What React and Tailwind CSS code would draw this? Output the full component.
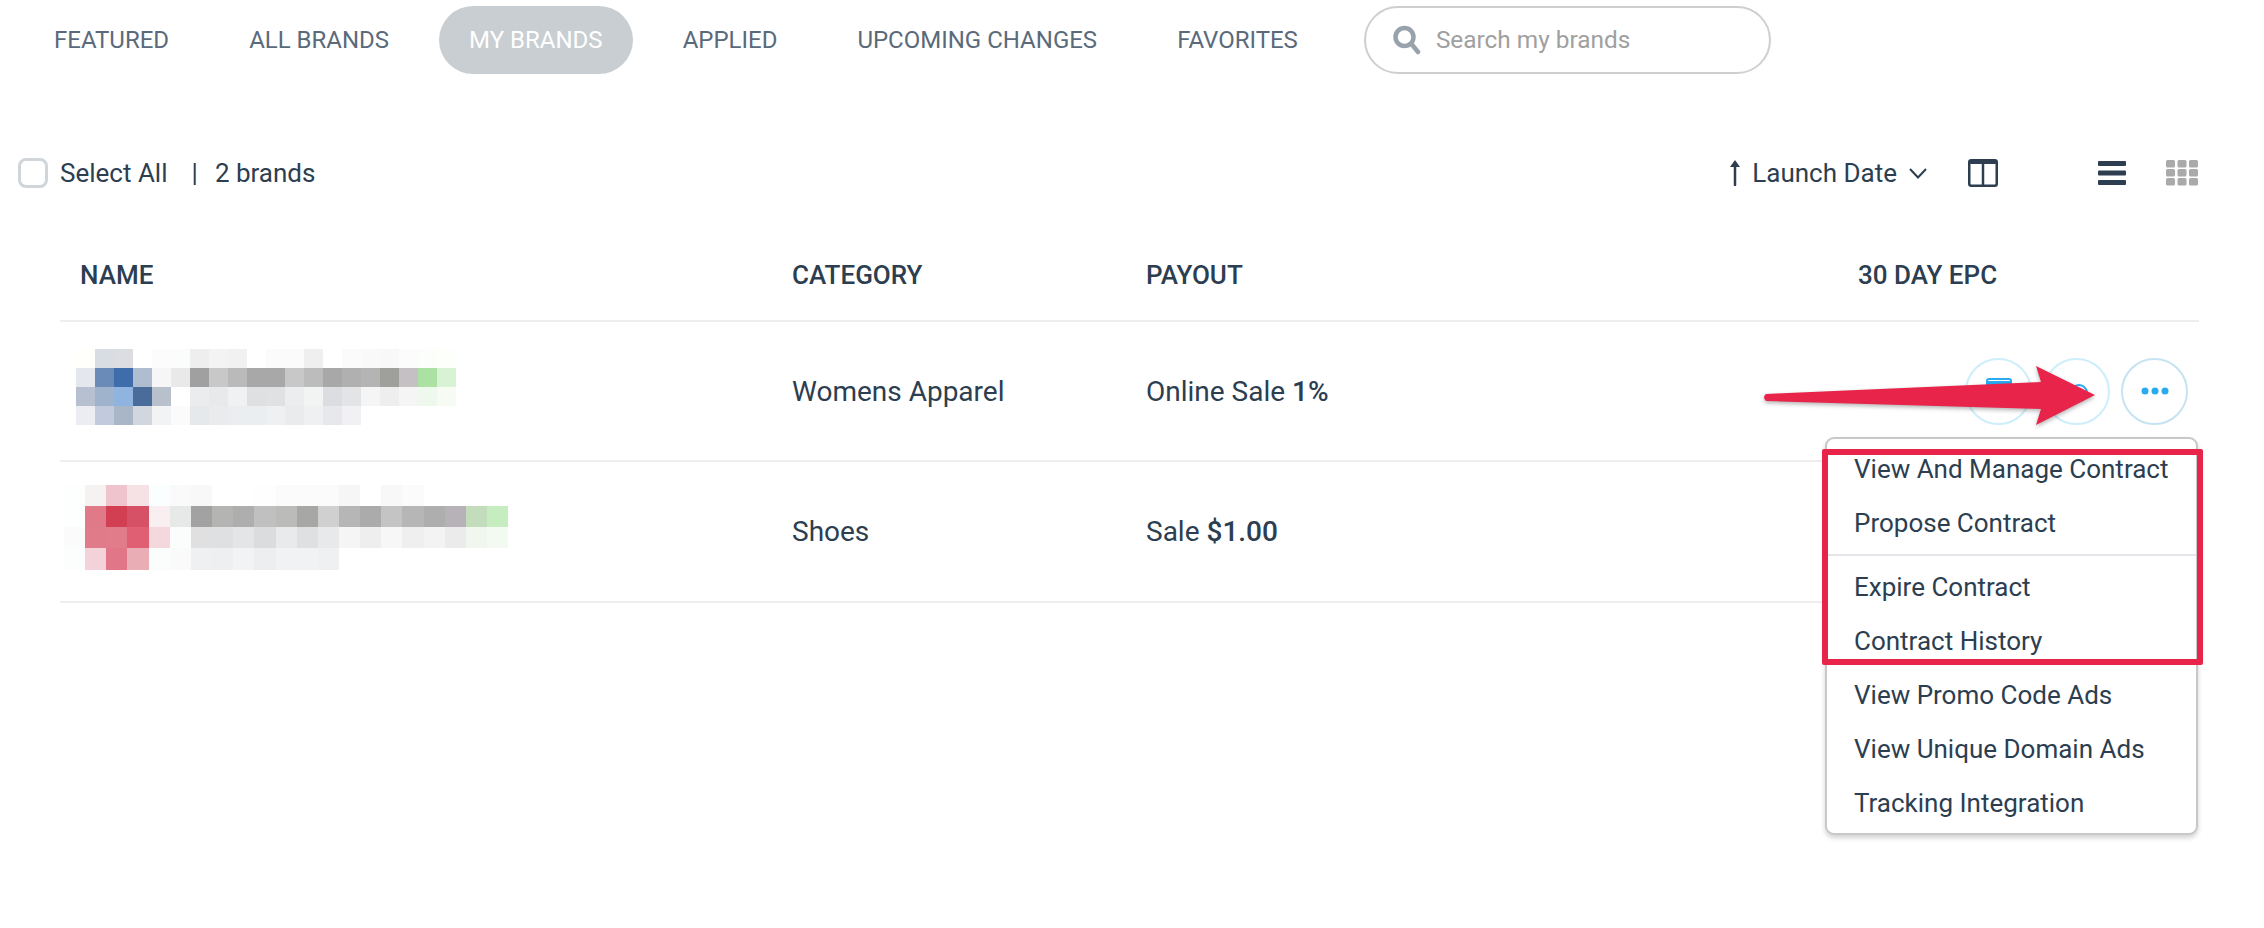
import React from 'react';

const tabs = ['FEATURED', 'ALL BRANDS', 'MY BRANDS', 'APPLIED', 'UPCOMING CHANGES', 'FAVORITES'];

// Blurred-out brand logos, one colour per mosaic cell
const blueLogo = [
  ['fffffc', 'd8dce3', 'dcdde0', 'ffffff', 'fcfcfc', 'fbfcfc', 'eeeeee', 'f3f3f3', 'f1f1f1', 'ffffff', 'fbfbfb', 'fbfbfb', 'efefef', 'ffffff', 'fbfbfb', 'f9f9f9', 'f8f8f8', 'fcfcfc', 'fcfefb', 'fdfffb'],
  ['e4e7ed', '6a8ab8', '3f6cab', 'b0bdd0', 'f6f6f6', 'e9e9e9', 'a0a0a0', 'c8c8c8', 'bababa', 'a8a8a8', 'a8a8a8', 'c8c8c8', 'bcbcbc', 'a8a8a8', 'b0b0b0', 'b4b4b4', '9f9f9c', 'c4c0c4', 'abe2a3', 'd8f3d4'],
  ['b6c0d0', 'a0b3cc', '8fb4e0', '4a6c9a', 'b8c0cc', 'ffffff', 'ebecee', 'e8e9ea', 'f0f1f2', 'dfe0e2', 'e0e1e3', 'ecedef', 'f2f3f3', 'dcdde0', 'e3e4e6', 'f5f5f5', 'eeeeee', 'f5f5f5', 'eef8ec', 'f6fbf4'],
  ['ecedf2', 'c2cbdd', 'a9b6c6', 'd2d6de', 'f2f3f5', 'fbfbfb', 'e5e9ec', 'e9ebed', 'ecedf0', 'ebeef1', 'eff0f2', 'eaebed', 'eff0f2', 'e7e8ec', 'f1f1f3'],
];

const redLogo = [
  ['fdfefe', 'f6f2f2', 'f0c4cc', 'f6e2e5', 'fbfeff', 'fafafa', 'f8f8f8', 'ffffff', 'ffffff', 'fefefe', 'fbfbfb', 'fbfbfb', 'fafbfa', 'f6f6f6', 'ffffff', 'f8f8f8', 'fbfbfb'],
  ['fdfefe', 'e07a88', 'd33f52', 'd65166', 'f9eef0', 'e7e9e8', 'a2a2a2', 'b4b4b2', 'aeaeae', 'c0c0c0', 'bbbbba', 'a7a7a5', 'd0d0d0', 'b6b6b6', 'ababab', 'c4c4c4', 'b6b6b6', 'aeaeae', 'b7b2b7', 'c2dcbc', 'c6edc0'],
  ['fbfbfb', 'e07c8a', 'e17c8a', 'e05f72', 'f5d8de', 'fbfdfc', 'e0e0e0', 'dfe0e1', 'e4e5e6', 'dbdcde', 'e9eaeb', 'dfe0e2', 'e8e9eb', 'f5f5f5', 'eeeeee', 'f7f7f7', 'efefef', 'f3f3f3', 'ebebeb', 'f1f6ef', 'f2faf2'],
  ['fcfdfd', 'f3d2da', 'e07688', 'e9adb6', 'fbfdfc', 'fafafa', 'eff0f2', 'eeeff1', 'f2f3f4', 'edeef0', 'f1f2f4', 'f1f2f4', 'eff0f2'],
];

const Mosaic = ({ cells, size }) => {
  const cols = Math.max(...cells.map(r => r.length));
  return (
    <svg width={cols * size} height={cells.length * size} className="block" shapeRendering="crispEdges">
      {cells.map((row, y) =>
        row.map((c, x) => (
          <rect key={`${x}-${y}`} x={x * size} y={y * size} width={size} height={size} fill={`#${c}`} />
        ))
      )}
    </svg>
  );
};

const ActionButton = ({ children, light }) => (
  <div className={`flex h-[67px] w-[67px] items-center justify-center rounded-full border-2 ${light ? 'border-[#cdeefa]' : 'border-[#c5e3f0]'}`}>
    {children}
  </div>
);

const Row = ({ logo, size, logoClass, height, textClass, category, payoutLabel, payoutValue, actions }) => (
  <div className={`grid ${height} grid-cols-[732px_354px_1fr] items-center border-b-2 border-[#eeeef0] text-[28px] text-[#2c3e50]`}>
    <div className={logoClass}>
      <Mosaic cells={logo} size={size} />
    </div>
    <div className={textClass}>{category}</div>
    <div className="flex items-center justify-between">
      <span className={textClass}>
        {payoutLabel} <span className="font-medium">{payoutValue}</span>
      </span>
      {actions}
    </div>
  </div>
);

const menuTop = ['View And Manage Contract', 'Propose Contract'];
const menuBottom = ['Expire Contract', 'Contract History', 'View Promo Code Ads', 'View Unique Domain Ads', 'Tracking Integration'];

const MenuItem = ({ label }) => (
  <div className="flex h-[54px] items-center pl-[27px] text-[26px] text-[#2c3e50]">{label}</div>
);

export default function App() {
  return (
    <div className="relative h-[928px] w-[2264px] overflow-hidden bg-white font-['Roboto',sans-serif]">
      {/* Tabs */}
      <div className="flex items-center gap-[20px] pl-[24px] pt-[6px]">
        {tabs.map(t => (
          <div
            key={t}
            className={`flex h-[68px] items-center rounded-[34px] px-[30px] text-[24px] ${t === 'MY BRANDS' ? 'bg-[#c9ced2] text-white' : 'text-[#5a6a7a]'}`}
          >
            {t}
          </div>
        ))}
        <div className="ml-[16px] flex h-[68px] w-[407px] items-center gap-[14px] rounded-[34px] border-2 border-[#cfcfcf] pl-[26px]">
          <svg width="30" height="30" viewBox="0 0 30 30" fill="none" stroke="#98a2ad" strokeWidth="4.5" strokeLinecap="round">
            <circle cx="12.5" cy="12" r="9" />
            <path d="M19.5 19 L26 27" />
          </svg>
          <span className="text-[24.4px] text-[#a0a0a0]">Search my brands</span>
        </div>
      </div>

      {/* Toolbar */}
      <div className="mt-[84px] flex h-[30px] items-center pl-[18px] pr-[66px] text-[26px] text-[#2c3e50]">
        <div className="h-[30px] w-[30px] rounded-[8px] border-[3px] border-[#d0d5da]" />
        <span className="ml-[12px]">Select All</span>
        <span className="ml-[24px]">|</span>
        <span className="ml-[17px]">2 brands</span>
        <div className="ml-auto flex items-center">
          <svg width="14" height="26" viewBox="0 0 14 26" fill="none">
            <path d="M7 25 V4" stroke="#2c3e50" strokeWidth="2.5" strokeLinecap="round" />
            <path d="M7 0 L12 7 H2 Z" fill="#2c3e50" />
          </svg>
          <span className="ml-[10px]">Launch Date</span>
          <svg className="ml-[12px]" width="18" height="11" viewBox="0 0 18 11" fill="none" stroke="#2c3e50" strokeWidth="2">
            <path d="M1 1 L9 9.5 L17 1" />
          </svg>
          <svg className="ml-[41px]" width="30" height="28" viewBox="0 0 30 28" fill="none">
            <rect x="1.25" y="1.25" width="27.5" height="25.5" rx="2" stroke="#2c3e50" strokeWidth="2.5" />
            <rect x="1" y="1" width="28" height="4" rx="2" fill="#2c3e50" />
            <path d="M15 2 V26" stroke="#2c3e50" strokeWidth="2.5" />
          </svg>
          <svg className="ml-[100px]" width="28" height="24" viewBox="0 0 28 24" fill="#2c3e50">
            <rect y="0" width="28" height="5" rx="1" />
            <rect y="9.5" width="28" height="5" rx="1" />
            <rect y="19" width="28" height="5" rx="1" />
          </svg>
          <svg className="ml-[40px]" width="32" height="26" viewBox="0 0 32 26" fill="#aaaaaa">
            {[0, 11.5, 23].map(x =>
              [0, 9, 18].map(y => <rect key={`${x}-${y}`} x={x} y={y} width="9" height="7.5" rx="1.5" />)
            )}
          </svg>
        </div>
      </div>

      {/* Table */}
      <div className="ml-[60px] mt-[42px] w-[2139px]">
        <div className="grid h-[92px] grid-cols-[732px_354px_712px_1fr] items-center border-b-2 border-[#eeeef0] text-[26px] font-medium text-[#2c3e50]">
          <div className="pl-[20px]">NAME</div>
          <div>CATEGORY</div>
          <div>PAYOUT</div>
          <div>30 DAY EPC</div>
        </div>
        <Row
          logo={blueLogo}
          size={19}
          height="h-[140px]"
          logoClass="ml-[16px] mb-[9px]"
          textClass="pt-[1px]"
          category="Womens Apparel"
          payoutLabel="Online Sale"
          payoutValue="1%"
          actions={
            <div className="mr-[11px] flex items-center gap-[11px]">
              <ActionButton light>
                <div className="h-[26px] w-[26px] rounded-[3px] border-2 border-[#29abf0] pt-[1px]">
                  <div className="h-[6px] bg-[#29abf0]" />
                </div>
              </ActionButton>
              <ActionButton light>
                <div className="ml-[4px] mt-[4px] h-[18px] w-[18px] rounded-full border-2 border-[#29abf0]" />
              </ActionButton>
              <ActionButton>
                <svg width="28" height="8" viewBox="0 0 28 8" fill="#29abf0">
                  <circle cx="4" cy="4" r="3.5" />
                  <circle cx="14" cy="4" r="3.5" />
                  <circle cx="24" cy="4" r="3.5" />
                </svg>
              </ActionButton>
            </div>
          }
        />
        <Row
          logo={redLogo}
          size={21.15}
          height="h-[141px]"
          logoClass="ml-[4px] mb-[8px]"
          category="Shoes"
          payoutLabel="Sale"
          payoutValue="$1.00"
        />
      </div>

      {/* Row action menu */}
      <div className="absolute left-[1825px] top-[437px] w-[373px] rounded-[9px] border-2 border-[#c8c8c8] bg-white pb-[3px] pt-[3px] shadow-[0_3px_5px_rgba(0,0,0,0.18)]">
        {menuTop.map(m => <MenuItem key={m} label={m} />)}
        <div className="my-[4px] h-[2px] bg-[#e6e6ea]" />
        {menuBottom.map(m => <MenuItem key={m} label={m} />)}
      </div>

      {/* Screenshot annotations */}
      <div className="absolute left-[1822px] top-[449px] h-[216px] w-[381px] rounded-[2px] border-[6px] border-[#e8244a]" />
      <svg className="absolute left-[1755px] top-[360px] drop-shadow-[0_2px_2px_rgba(0,0,0,0.3)]" width="350" height="75" viewBox="1755 360 350 75">
        <path
          d="M1766 394 L2041 382 L2036 366 L2095 395 L2036 425 L2041 409 L1766 401 Q1762 397 1766 394 Z"
          fill="#e8244a"
        />
      </svg>
    </div>
  );
}
